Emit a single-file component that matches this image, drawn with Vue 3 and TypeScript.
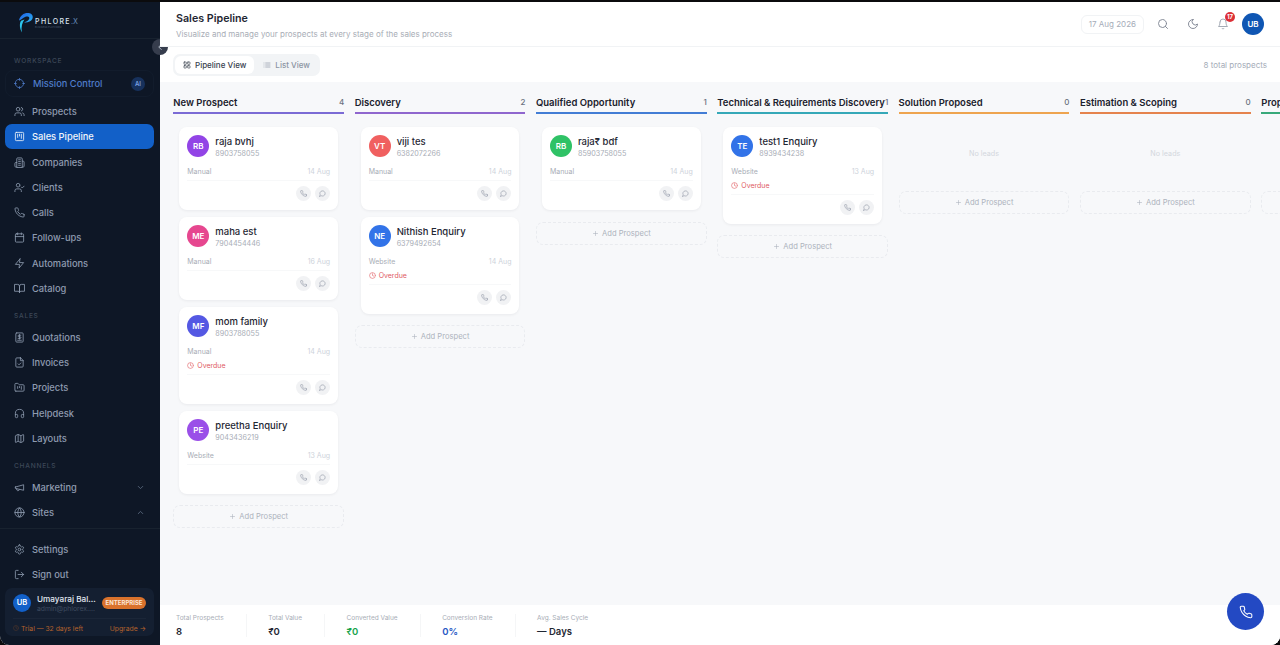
<script setup lang="ts">
import { computed } from "vue";

type Nav = { label: string; icon: string; active?: boolean; chevron?: "up" | "down" };
type Lead = { initials: string; color: string; name: string; phone: string; source: string; date: string; overdue?: boolean };
type Stage = { name: string; color: string; count: number; leads: Lead[] };

const icons: Record<string, string> = {
  users: "M16 21v-2a4 4 0 0 0-4-4H6a4 4 0 0 0-4 4v2 M13 7a4 4 0 1 1-8 0 4 4 0 0 1 8 0 M22 21v-2a4 4 0 0 0-3-3.87 M16 3.13a4 4 0 0 1 0 7.75",
  kanban: "M5 3h14a2 2 0 0 1 2 2v14a2 2 0 0 1-2 2H5a2 2 0 0 1-2-2V5a2 2 0 0 1 2-2z M8 7v7 M12 7v4 M16 7v9",
  building: "M6 22V4a2 2 0 0 1 2-2h8a2 2 0 0 1 2 2v18Z M6 12H4a2 2 0 0 0-2 2v6a2 2 0 0 0 2 2h2 M18 9h2a2 2 0 0 1 2 2v9a2 2 0 0 1-2 2h-2 M10 6h4 M10 10h4 M10 14h4 M10 18h4",
  client: "M16 21v-2a4 4 0 0 0-4-4H6a4 4 0 0 0-4 4v2 M13 7a4 4 0 1 1-8 0 4 4 0 0 1 8 0 M16 11l2 2 4-4",
  phone: "M22 16.92v3a2 2 0 0 1-2.18 2 19.79 19.79 0 0 1-8.63-3.07 19.5 19.5 0 0 1-6-6 19.79 19.79 0 0 1-3.07-8.67A2 2 0 0 1 4.11 2h3a2 2 0 0 1 2 1.72 12.84 12.84 0 0 0 .7 2.81 2 2 0 0 1-.45 2.11L8.09 9.91a16 16 0 0 0 6 6l1.27-1.27a2 2 0 0 1 2.11-.45 12.84 12.84 0 0 0 2.81.7A2 2 0 0 1 22 16.92z",
  calendar: "M5 4h14a2 2 0 0 1 2 2v14a2 2 0 0 1-2 2H5a2 2 0 0 1-2-2V6a2 2 0 0 1 2-2z M16 2v4 M8 2v4 M3 10h18",
  zap: "M13 2 3 14h9l-1 8 10-12h-9l1-8z",
  book: "M2 3h6a4 4 0 0 1 4 4v14a3 3 0 0 0-3-3H2z M22 3h-6a4 4 0 0 0-4 4v14a3 3 0 0 1 3-3h7z",
  receipt: "M6 2h12a2 2 0 0 1 2 2v16a2 2 0 0 1-2 2H6a2 2 0 0 1-2-2V4a2 2 0 0 1 2-2z M15 7H10.5a1.75 1.75 0 0 0 0 3.5h3a1.75 1.75 0 0 1 0 3.5H9 M12 5.5v10 M8 18h8",
  invoice: "M14.5 2H6a2 2 0 0 0-2 2v16a2 2 0 0 0 2 2h12a2 2 0 0 0 2-2V7.5L14.5 2z M14 2v6h6 M9 15l2 2 4-4",
  folder: "M4 20h16a2 2 0 0 0 2-2V8a2 2 0 0 0-2-2h-7.93a2 2 0 0 1-1.66-.9l-.82-1.2A2 2 0 0 0 7.93 3H4a2 2 0 0 0-2 2v13c0 1.1.9 2 2 2Z M8 10v4 M12 10v2 M16 10v6",
  headphones: "M3 14h3a2 2 0 0 1 2 2v3a2 2 0 0 1-2 2H5a2 2 0 0 1-2-2v-7a9 9 0 0 1 18 0v7a2 2 0 0 1-2 2h-1a2 2 0 0 1-2-2v-3a2 2 0 0 1 2-2h3",
  map: "M14.106 5.553a2 2 0 0 0 1.788 0l3.659-1.83A1 1 0 0 1 21 4.619v12.764a1 1 0 0 1-.553.894l-4.553 2.277a2 2 0 0 1-1.788 0l-4.212-2.106a2 2 0 0 0-1.788 0l-3.659 1.83A1 1 0 0 1 3 19.381V6.618a1 1 0 0 1 .553-.894l4.553-2.277a2 2 0 0 1 1.788 0z M15 5.764v15 M9 3.236v15",
  megaphone: "m3 11 18-5v12L3 14v-3z M11.6 16.8a3 3 0 1 1-5.8-1.6",
  globe: "M22 12a10 10 0 1 1-20 0 10 10 0 0 1 20 0 M12 2a14.5 14.5 0 0 0 0 20 14.5 14.5 0 0 0 0-20 M2 12h20",
  settings: "M12.22 2h-.44a2 2 0 0 0-2 2v.18a2 2 0 0 1-1 1.73l-.43.25a2 2 0 0 1-2 0l-.15-.08a2 2 0 0 0-2.73.73l-.22.38a2 2 0 0 0 .73 2.73l.15.1a2 2 0 0 1 1 1.72v.51a2 2 0 0 1-1 1.74l-.15.09a2 2 0 0 0-.73 2.73l.22.38a2 2 0 0 0 2.73.73l.15-.08a2 2 0 0 1 2 0l.43.25a2 2 0 0 1 1 1.73V20a2 2 0 0 0 2 2h.44a2 2 0 0 0 2-2v-.18a2 2 0 0 1 1-1.73l.43-.25a2 2 0 0 1 2 0l.15.08a2 2 0 0 0 2.73-.73l.22-.39a2 2 0 0 0-.73-2.73l-.15-.08a2 2 0 0 1-1-1.74v-.5a2 2 0 0 1 1-1.74l.15-.09a2 2 0 0 0 .73-2.73l-.22-.38a2 2 0 0 0-2.73-.73l-.15.08a2 2 0 0 1-2 0l-.43-.25a2 2 0 0 1-1-1.73V4a2 2 0 0 0-2-2z M15 12a3 3 0 1 1-6 0 3 3 0 0 1 6 0",
  logout: "M9 21H5a2 2 0 0 1-2-2V5a2 2 0 0 1 2-2h4 M16 17l5-5-5-5 M21 12H9",
  target: "M21 12a9 9 0 1 1-18 0 9 9 0 0 1 18 0 M12 1v4 M12 19v4 M1 12h4 M19 12h4",
  search: "M19 11a8 8 0 1 1-16 0 8 8 0 0 1 16 0 M21 21l-4.3-4.3",
  moon: "M12 3a6 6 0 0 0 9 9 9 9 0 1 1-9-9Z",
  bell: "M6 8a6 6 0 0 1 12 0c0 7 3 9 3 9H3s3-2 3-9 M10.3 21a1.94 1.94 0 0 0 3.4 0",
  grid: "M4 3h5a1 1 0 0 1 1 1v5a1 1 0 0 1-1 1H4a1 1 0 0 1-1-1V4a1 1 0 0 1 1-1z M15 3h5a1 1 0 0 1 1 1v5a1 1 0 0 1-1 1h-5a1 1 0 0 1-1-1V4a1 1 0 0 1 1-1z M15 14h5a1 1 0 0 1 1 1v5a1 1 0 0 1-1 1h-5a1 1 0 0 1-1-1v-5a1 1 0 0 1 1-1z M4 14h5a1 1 0 0 1 1 1v5a1 1 0 0 1-1 1H4a1 1 0 0 1-1-1v-5a1 1 0 0 1 1-1z",
  list: "M8 6h13 M8 12h13 M8 18h13 M3 6h.01 M3 12h.01 M3 18h.01",
  message: "M7.9 20A9 9 0 1 0 4 16.1L2 22Z",
  clock: "M22 12a10 10 0 1 1-20 0 10 10 0 0 1 20 0 M12 6v6l4 2",
  plus: "M5 12h14 M12 5v14",
  down: "m6 9 6 6 6-6",
  up: "m18 15-6-6-6 6",
  left: "m15 18-6-6 6-6",
};

const workspace: Nav[] = [
  { label: "Prospects", icon: "users" },
  { label: "Sales Pipeline", icon: "kanban", active: true },
  { label: "Companies", icon: "building" },
  { label: "Clients", icon: "client" },
  { label: "Calls", icon: "phone" },
  { label: "Follow-ups", icon: "calendar" },
  { label: "Automations", icon: "zap" },
  { label: "Catalog", icon: "book" },
];
const sales: Nav[] = [
  { label: "Quotations", icon: "receipt" },
  { label: "Invoices", icon: "invoice" },
  { label: "Projects", icon: "folder" },
  { label: "Helpdesk", icon: "headphones" },
  { label: "Layouts", icon: "map" },
];
const channels: Nav[] = [
  { label: "Marketing", icon: "megaphone", chevron: "down" },
  { label: "Sites", icon: "globe", chevron: "up" },
];
const bottom: Nav[] = [
  { label: "Settings", icon: "settings" },
  { label: "Sign out", icon: "logout" },
];

const stages: Stage[] = [
  {
    name: "New Prospect", color: "#6d5bd0", count: 4,
    leads: [
      { initials: "RB", color: "#9244e6", name: "raja bvhj", phone: "8903758055", source: "Manual", date: "14 Aug" },
      { initials: "ME", color: "#e6478f", name: "maha est", phone: "7904454446", source: "Manual", date: "16 Aug" },
      { initials: "MF", color: "#5458e3", name: "mom family", phone: "8903788055", source: "Manual", date: "14 Aug", overdue: true },
      { initials: "PE", color: "#9a4fe8", name: "preetha Enquiry", phone: "9043436219", source: "Website", date: "13 Aug" },
    ],
  },
  {
    name: "Discovery", color: "#8355c9", count: 2,
    leads: [
      { initials: "VT", color: "#f06060", name: "viji tes", phone: "6382072266", source: "Manual", date: "14 Aug" },
      { initials: "NE", color: "#3273e8", name: "Nithish Enquiry", phone: "6379492654", source: "Website", date: "14 Aug", overdue: true },
    ],
  },
  {
    name: "Qualified Opportunity", color: "#2f6fd0", count: 1,
    leads: [{ initials: "RB", color: "#2fc266", name: "raja₹ bdf", phone: "85903758055", source: "Manual", date: "14 Aug" }],
  },
  {
    name: "Technical & Requirements Discovery", color: "#1f9fb0", count: 1,
    leads: [{ initials: "TE", color: "#3273e8", name: "test1 Enquiry", phone: "8939434238", source: "Website", date: "13 Aug", overdue: true }],
  },
  { name: "Solution Proposed", color: "#ec9a3c", count: 0, leads: [] },
  { name: "Estimation & Scoping", color: "#e2763a", count: 0, leads: [] },
  { name: "Proposal Sent", color: "#22a06b", count: 0, leads: [] },
];

const stats = [
  { label: "Total Prospects", value: "8", tone: "" },
  { label: "Total Value", value: "₹0", tone: "" },
  { label: "Converted Value", value: "₹0", tone: "green" },
  { label: "Conversion Rate", value: "0%", tone: "blue" },
  { label: "Avg. Sales Cycle", value: "— Days", tone: "" },
];

const total = computed(() => stages.reduce((sum, s) => sum + s.count, 0));
</script>

<template>
  <div class="app">
    <aside class="sidebar">
      <div class="logo">
        <svg class="logo-mark" width="16" height="21" viewBox="0 0 16 21">
          <defs>
            <linearGradient id="lg" x1="0" y1="0" x2="1" y2="1">
              <stop offset="0" stop-color="#1f5be8" />
              <stop offset="1" stop-color="#2bb8f0" />
            </linearGradient>
          </defs>
          <path d="M1 8.500C2 3 6.500.5 10.500 1c4 .5 5 3.500 3.800 6S9.500 11 6 10.500c2.300-.8 5-2 5.300-4S9 4 7 5 3.500 7.500 1 8.500Z" fill="url(#lg)" />
          <path d="M6.500 7.500c-2.300 3-3.500 7.500-2.700 13C2 17 1 12 3 8.800Z" fill="#2cc6ee" />
        </svg>
        <div class="logo-text">
          <span class="logo-word">PHLORE<em>.X</em></span>
          <span class="logo-tag">BUSINESS PLATFORM</span>
        </div>
      </div>
      <button class="collapse" type="button" aria-label="Collapse">
        <svg viewBox="0 0 24 24"><path :d="icons.left" /></svg>
      </button>

      <div class="nav-scroll">
        <p class="group first">WORKSPACE</p>
        <div class="mission">
          <svg class="ico" viewBox="0 0 24 24"><path :d="icons.target" /></svg>
          <span>Mission Control</span>
          <b>AI</b>
        </div>
        <a v-for="n in workspace" :key="n.label" class="item" :class="{ active: n.active }">
          <svg class="ico" viewBox="0 0 24 24"><path :d="icons[n.icon]" /></svg>
          <span>{{ n.label }}</span>
        </a>
        <p class="group">SALES</p>
        <a v-for="n in sales" :key="n.label" class="item">
          <svg class="ico" viewBox="0 0 24 24"><path :d="icons[n.icon]" /></svg>
          <span>{{ n.label }}</span>
        </a>
        <p class="group">CHANNELS</p>
        <a v-for="n in channels" :key="n.label" class="item">
          <svg class="ico" viewBox="0 0 24 24"><path :d="icons[n.icon]" /></svg>
          <span>{{ n.label }}</span>
          <svg class="chev" viewBox="0 0 24 24"><path :d="icons[n.chevron ?? 'down']" /></svg>
        </a>
      </div>

      <div class="side-bottom">
        <a v-for="n in bottom" :key="n.label" class="item">
          <svg class="ico" viewBox="0 0 24 24"><path :d="icons[n.icon]" /></svg>
          <span>{{ n.label }}</span>
        </a>
        <div class="account">
          <div class="account-top">
            <span class="account-avatar">UB</span>
            <div class="account-who">
              <strong>Umayaraj Bal...</strong>
              <small>admin@phlorex....</small>
            </div>
            <span class="plan">ENTERPRISE</span>
          </div>
          <div class="account-trial">
            <span class="trial"><svg viewBox="0 0 24 24"><path :d="icons.clock" /></svg>Trial — 32 days left</span>
            <span class="upgrade">Upgrade →</span>
          </div>
        </div>
      </div>
    </aside>

    <main class="main">
      <header class="topbar">
        <div>
          <h1>Sales Pipeline</h1>
          <p>Visualize and manage your prospects at every stage of the sales process</p>
        </div>
        <div class="top-actions">
          <span class="date">17 Aug 2026</span>
          <svg class="top-ico" viewBox="0 0 24 24"><path :d="icons.search" /></svg>
          <svg class="top-ico" viewBox="0 0 24 24"><path :d="icons.moon" /></svg>
          <span class="bell">
            <svg class="top-ico" viewBox="0 0 24 24"><path :d="icons.bell" /></svg>
            <i>17</i>
          </span>
          <span class="me">UB</span>
        </div>
      </header>

      <div class="toolbar">
        <div class="tabs">
          <span class="tab on"><svg viewBox="0 0 24 24"><path :d="icons.grid" /></svg>Pipeline View</span>
          <span class="tab"><svg viewBox="0 0 24 24"><path :d="icons.list" /></svg>List View</span>
        </div>
        <span class="total">{{ total }} total prospects</span>
      </div>

      <section class="board">
        <div v-for="s in stages" :key="s.name" class="column">
          <div class="col-head">
            <span class="col-name">{{ s.name }}</span>
            <span class="col-count">{{ s.count }}</span>
          </div>
          <div class="col-line" :style="{ background: s.color }"></div>
          <div class="cards">
            <article v-for="l in s.leads" :key="l.phone" class="card">
              <div class="card-top">
                <span class="avatar" :style="{ background: l.color }">{{ l.initials }}</span>
                <div>
                  <div class="lead-name">{{ l.name }}</div>
                  <div class="lead-phone">{{ l.phone }}</div>
                </div>
              </div>
              <div class="card-meta"><span>{{ l.source }}</span><span class="meta-date">{{ l.date }}</span></div>
              <div v-if="l.overdue" class="overdue"><svg viewBox="0 0 24 24"><path :d="icons.clock" /></svg>Overdue</div>
              <div class="card-actions">
                <span class="round"><svg viewBox="0 0 24 24"><path :d="icons.phone" /></svg></span>
                <span class="round"><svg viewBox="0 0 24 24"><path :d="icons.message" /></svg></span>
              </div>
            </article>
            <div v-if="!s.leads.length" class="empty">No leads</div>
          </div>
          <div class="add"><svg viewBox="0 0 24 24"><path :d="icons.plus" /></svg>Add Prospect</div>
        </div>
      </section>

      <footer class="stats">
        <div v-for="st in stats" :key="st.label" class="stat">
          <span class="stat-label">{{ st.label }}</span>
          <span class="stat-value" :class="st.tone">{{ st.value }}</span>
        </div>
      </footer>
      <button class="fab" type="button" aria-label="Call">
        <svg viewBox="0 0 24 24"><path :d="icons.phone" /></svg>
      </button>
    </main>
  </div>
</template>

<style>
html, body {
  margin: 0;
  height: 100%;
  background: #0b0b0d;
  overflow: hidden;
}
</style>

<style scoped>
.app {
  position: relative;
  width: 1280px;
  height: 643px;
  margin-top: 2px;
  display: flex;
  overflow: hidden;
  border-radius: 0 0 9px 9px;
  background: #fff;
  font-family: Inter, "Noto Sans", sans-serif;
}
svg {
  fill: none;
  stroke: currentColor;
  stroke-width: 2;
  stroke-linecap: round;
  stroke-linejoin: round;
  flex: none;
}

/* sidebar */
.sidebar {
  position: relative;
  width: 160px;
  flex: none;
  display: flex;
  flex-direction: column;
  background: #0e1726;
  color: #8e9bb0;
}
.logo {
  height: 37px;
  flex: none;
  box-sizing: border-box;
  padding: 10px 0 0 18px;
  display: flex;
  gap: 1px;
  border-bottom: 1px solid #18222f;
}
.logo-mark {
  stroke: none;
}
.logo-text {
  display: flex;
  flex-direction: column;
  padding-top: 6px;
  line-height: 1;
}
.logo-word {
  font-size: 7px;
  font-weight: 500;
  letter-spacing: 1.400px;
  color: #dbe3ee;
  white-space: nowrap;
}
.logo-word em {
  font-style: normal;
  letter-spacing: 0;
  color: #5c7fa8;
}
.logo-tag {
  font-size: 2.500px;
  color: #4b5a70;
  margin-top: 2px;
}
.collapse {
  position: absolute;
  top: 37px;
  right: -8px;
  width: 16px;
  height: 16px;
  padding: 3px;
  border: 0;
  border-radius: 50%;
  background: #363d4d;
  color: #cbd5e1;
  z-index: 3;
  display: flex;
}
.collapse svg {
  width: 10px;
  height: 10px;
}
.nav-scroll {
  flex: 1;
  min-height: 0;
  overflow: hidden;
  padding: 0 6px 0 5px;
}
.group {
  margin: 0;
  padding: 10.500px 0 4px 9px;
  font-size: 6.600px;
  line-height: 9px;
  letter-spacing: 0.75px;
  color: #3d4858;
  font-weight: 500;
}
.group.first {
  padding-top: 18px;
}
.mission {
  height: 27px;
  box-sizing: border-box;
  display: flex;
  align-items: center;
  gap: 8px;
  padding: 0 8px 0 8px;
  margin-bottom: 1.800px;
  border: 1px solid #121c2c;
  border-radius: 8px;
  color: #4f7cc9;
  font-size: 9.300px;
  font-weight: 500;
}
.mission b {
  margin-left: auto;
  width: 14px;
  height: 14px;
  border-radius: 50%;
  background: #17315c;
  color: #7da3e0;
  font-size: 6px;
  font-weight: 600;
  display: flex;
  align-items: center;
  justify-content: center;
}
.item {
  height: 25.300px;
  display: flex;
  align-items: center;
  gap: 7px;
  padding: 0 9px;
  box-sizing: border-box;
  border-radius: 7px;
  font-size: 9.300px;
  font-weight: 500;
  color: #8e9bb0;
}
.item.active {
  background: #1260c8;
  color: #f1f5f9;
}
.ico {
  width: 11px;
  height: 11px;
  stroke-width: 1.800;
}
.chev {
  width: 9px;
  height: 9px;
  margin-left: auto;
  color: #64748b;
}
.side-bottom {
  flex: none;
  height: 117px;
  box-sizing: border-box;
  padding: 8px 6px 0 5px;
  border-top: 1px solid #18222f;
}
.account {
  height: 48px;
  border-radius: 7px;
  background: #141f31;
  box-sizing: border-box;
  padding: 3px 8px 0;
}
.account-top {
  display: flex;
  align-items: center;
  gap: 6px;
  height: 24px;
}
.account-avatar {
  width: 18px;
  height: 18px;
  flex: none;
  border-radius: 50%;
  background: #1260c8;
  color: #fff;
  font-size: 7.500px;
  font-weight: 600;
  display: flex;
  align-items: center;
  justify-content: center;
}
.account-who {
  display: flex;
  flex-direction: column;
  min-width: 0;
  flex: 1;
  line-height: 1;
  padding-top: 2px;
}
.account-who strong {
  font-size: 8.200px;
  font-weight: 500;
  color: #e2e8f0;
  white-space: nowrap;
}
.account-who small {
  font-size: 6.800px;
  color: #3f4c60;
  margin-top: 3px;
  white-space: nowrap;
}
.plan {
  padding: 2.500px 3.500px;
  border-radius: 6px;
  background: #d9722c;
  color: #fbe6d5;
  font-size: 6px;
  font-weight: 700;
  line-height: 7px;
  flex: none;
}
.account-trial {
  display: flex;
  justify-content: space-between;
  align-items: center;
  margin-top: 3px;
  padding-top: 5px;
  border-top: 1px solid #1b2638;
  font-size: 6.800px;
  color: #b5622c;
}
.trial {
  display: flex;
  align-items: center;
  gap: 2px;
}
.trial svg {
  width: 6px;
  height: 6px;
  color: #5b3a2a;
}

/* main */
.main {
  position: relative;
  flex: 1;
  min-width: 0;
  display: flex;
  flex-direction: column;
  background: #f7f8fa;
}
.topbar {
  position: relative;
  z-index: 4;
  height: 45px;
  flex: none;
  box-sizing: border-box;
  padding: 9px 16px 0;
  background: #fff;
  border-bottom: 1px solid #f1f3f5;
  display: flex;
  justify-content: space-between;
}
h1 {
  margin: 0;
  font-size: 10.700px;
  line-height: 15px;
  font-weight: 600;
  color: #1f2733;
}
.topbar p {
  margin: 3px 0 0;
  font-size: 8px;
  line-height: 10px;
  color: #a8adb6;
}
.top-actions {
  display: flex;
  align-items: center;
  height: 24px;
  margin-top: 1px;
}
.date {
  height: 19px;
  box-sizing: border-box;
  padding: 0 7px;
  border: 1px solid #f1f3f5;
  border-radius: 6px;
  font-size: 8px;
  line-height: 17px;
  color: #a5acb8;
  margin-right: 13px;
}
.top-ico {
  width: 12px;
  height: 12px;
  color: #7a818e;
  stroke-width: 1.800;
  margin-right: 18px;
}
.bell {
  position: relative;
  display: flex;
  margin-right: 13px;
}
.bell .top-ico {
  margin-right: 0;
  color: #9aa1ad;
}
.bell i {
  position: absolute;
  top: -6px;
  left: 8px;
  width: 10px;
  height: 10px;
  border-radius: 50%;
  background: #dc2f36;
  color: #fff;
  font-style: normal;
  font-size: 6px;
  font-weight: 700;
  line-height: 10px;
  text-align: center;
}
.me {
  width: 22px;
  height: 22px;
  border-radius: 50%;
  background: #0f56b3;
  color: #fff;
  font-size: 8px;
  font-weight: 600;
  display: flex;
  align-items: center;
  justify-content: center;
}
.toolbar {
  height: 35px;
  flex: none;
  box-sizing: border-box;
  padding: 0 13px;
  background: #fff;
  display: flex;
  align-items: center;
  justify-content: space-between;
}
.tabs {
  display: flex;
  gap: 1px;
  padding: 2px;
  border-radius: 7px;
  background: #f2f4f6;
}
.tab {
  height: 18px;
  padding: 0 8px;
  display: flex;
  align-items: center;
  gap: 4px;
  border-radius: 6px;
  font-size: 8px;
  font-weight: 500;
  color: #8d95a3;
}
.tab.on {
  background: #fff;
  color: #39424f;
}
.tab svg {
  width: 8px;
  height: 8px;
}
.total {
  font-size: 8px;
  color: #a5acb8;
}
.board {
  flex: 1;
  min-height: 0;
  overflow: hidden;
  display: flex;
  gap: 10.500px;
  padding: 12px 0 0 13.300px;
}
.column {
  width: 170.830px;
  flex: none;
}
.col-head {
  height: 17.500px;
  display: flex;
  align-items: flex-start;
  justify-content: space-between;
  white-space: nowrap;
  line-height: 17px;
}
.col-line {
  height: 2px;
  opacity: 0.9;
}
.col-name {
  font-size: 9.500px;
  font-weight: 600;
  color: #1a202c;
}
.col-count {
  font-size: 8px;
  font-weight: 500;
  color: #6b7280;
}
.cards {
  padding: 13.500px 6px 0;
  display: flex;
  flex-direction: column;
  gap: 7px;
}
.card {
  box-sizing: border-box;
  padding: 8px 8px 9px;
  background: #fff;
  border-radius: 8px;
  box-shadow: 0 1px 3px rgba(15, 23, 42, 0.06);
}
.card-top {
  display: flex;
  gap: 6px;
  height: 22px;
}
.avatar {
  width: 22px;
  height: 22px;
  flex: none;
  border-radius: 50%;
  color: #fff;
  font-size: 8px;
  font-weight: 600;
  display: flex;
  align-items: center;
  justify-content: center;
}
.lead-name {
  font-size: 9.500px;
  font-weight: 500;
  line-height: 13px;
  color: #1f2733;
}
.lead-phone {
  font-size: 7.200px;
  line-height: 11px;
  color: #a8adb6;
}
.card-meta {
  display: flex;
  justify-content: space-between;
  margin-top: 10px;
  font-size: 7px;
  line-height: 9px;
  color: #a8adb6;
}
.meta-date {
  color: #cdd2da;
}
.overdue {
  display: flex;
  align-items: center;
  gap: 3px;
  margin-top: 4.500px;
  font-size: 7px;
  line-height: 9px;
  color: #e05a5f;
}
.overdue svg {
  width: 7px;
  height: 7px;
}
.card-actions {
  display: flex;
  justify-content: flex-end;
  gap: 4px;
  margin-top: 4px;
  padding-top: 5px;
  border-top: 1px solid #f7f8f9;
}
.round {
  width: 15px;
  height: 15px;
  border-radius: 50%;
  background: #f1f2f4;
  color: #8d95a3;
  display: flex;
  align-items: center;
  justify-content: center;
}
.round svg {
  width: 7px;
  height: 7px;
}
.empty {
  height: 52.500px;
  padding-top: 21.500px;
  box-sizing: border-box;
  font-size: 7.200px;
  line-height: 10px;
  color: #d3d7dd;
  text-align: center;
}
.add {
  height: 23px;
  margin-top: 11.500px;
  box-sizing: border-box;
  border: 1px dashed #e9ebef;
  border-radius: 7px;
  display: flex;
  align-items: center;
  justify-content: center;
  gap: 3px;
  font-size: 7.600px;
  color: #adb3bd;
}
.add svg {
  width: 7px;
  height: 7px;
}
.stats {
  height: 40px;
  flex: none;
  box-sizing: border-box;
  padding: 9px 0 0 16px;
  background: #fff;
  display: flex;
}
.stat {
  display: flex;
  flex-direction: column;
  padding-right: 22.300px;
  margin-right: 21.300px;
  height: 23px;
  border-right: 1px solid #f5f6f7;
}
.stat:last-child {
  border: 0;
}
.stat-label {
  font-size: 6.500px;
  line-height: 9px;
  color: #a8adb6;
}
.stat-value {
  margin-top: 2px;
  font-size: 9.500px;
  font-weight: 600;
  line-height: 13px;
  color: #1f2733;
}
.stat-value.green {
  color: #16a34a;
}
.stat-value.blue {
  color: #2456c4;
}
.fab {
  position: absolute;
  right: 16px;
  bottom: 15px;
  width: 37px;
  height: 37px;
  padding: 0;
  border: 0;
  border-radius: 50%;
  background: #2349c3;
  color: #fff;
  display: flex;
  align-items: center;
  justify-content: center;
}
.fab svg {
  width: 14px;
  height: 14px;
  stroke-width: 1.800;
}
</style>
